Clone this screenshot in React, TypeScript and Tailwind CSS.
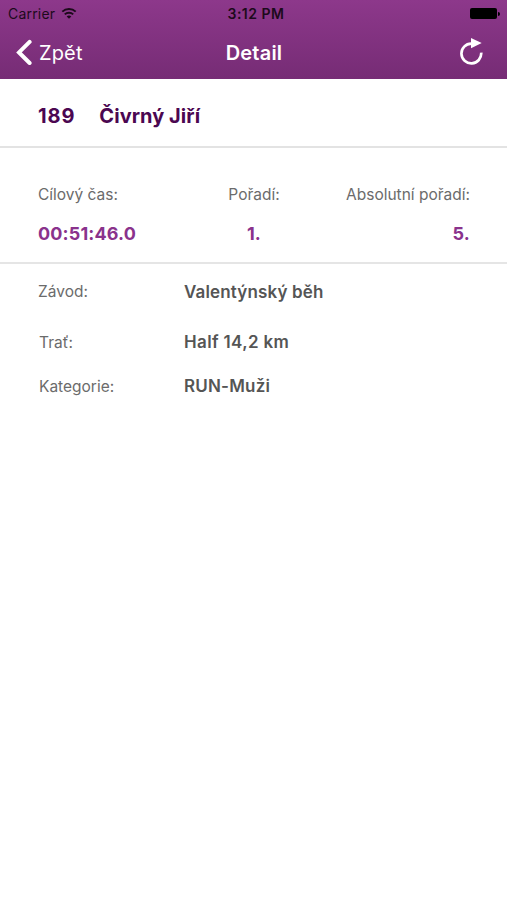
import clsx from "clsx";

const STATS = [
  { label: "Cílový čas:", value: "00:51:46.0" },
  { label: "Pořadí:", value: "1." },
  { label: "Absolutní pořadí:", value: "5." },
];

const RACE_INFO = [
  { label: "Závod:", value: "Valentýnský běh", row: "h-[56px] pl-[38px]", term: "w-[146px]", text: "pt-px tracking-[0.15px]" },
  { label: "Trať:", value: "Half 14,2 km", row: "h-[45px] pl-[39px]", term: "w-[145px]", text: "tracking-[0.35px]" },
  { label: "Kategorie:", value: "RUN-Muži", row: "h-[43px] pl-[39px]", term: "w-[145px]", text: "tracking-[0.2px]" },
];

const StatusBar = () => {
  return (
    <div className="grid h-[27px] grid-cols-3 items-center px-2 text-[14px] text-[#1c0a1b]">
      <div className="flex items-center gap-1.5">
        <span className="tracking-[0.2px]">Carrier</span>
        <svg className="mb-[2px] h-3 w-4" viewBox="0 0 16 12" fill="none" stroke="currentColor" strokeWidth="2">
          <path d="M1.3 4.6C5 1 11 1 14.7 4.6M3.8 7.4C6 5.2 10 5.2 12.2 7.4" />
          <path d="M8 11.8L5.7 9.4C7 8.3 9 8.3 10.3 9.4Z" fill="currentColor" stroke="none" />
        </svg>
      </div>
      <span className="pl-[5px] text-center font-semibold tracking-[0.5px]">3:12 PM</span>
      <div className="mr-[-1px] flex items-center justify-end">
        <div className="h-[11px] w-[27px] rounded-[2px] bg-black" />
        <div className="ml-px h-1 w-[2px] rounded-r bg-black" />
      </div>
    </div>
  );
};

const NavBar = () => {
  return (
    <div className="grid h-[52px] grid-cols-3 items-center px-4 text-white">
      <button className="flex items-center gap-[7px] text-[20px]">
        <svg className="mb-[2px] h-[26px] w-4" viewBox="0 0 16 26" fill="none" stroke="currentColor" strokeWidth="4">
          <path d="M13.6 2.9L3 13.4L13.6 24" strokeLinecap="round" />
        </svg>
        <span className="pb-px tracking-[0.15px]">Zpět</span>
      </button>
      <h1 className="pb-px pl-px text-center text-[20px] font-semibold tracking-[0.2px]">Detail</h1>
      <button className="mr-[7px] justify-self-end" aria-label="Obnovit">
        <svg className="mb-[2px] h-[28px] w-[24px]" viewBox="0 0 24 28" fill="none" stroke="currentColor" strokeWidth="2.7">
          <path d="M11.3 5.6A9.9 9.9 0 1 0 21.2 14.7" />
          <path d="M11 .1L21.7 4.9L11 10.2Z" fill="currentColor" stroke="none" />
        </svg>
      </button>
    </div>
  );
};

export default function App() {
  return (
    <div className="min-h-screen w-full bg-white font-['Inter','Liberation_Sans',sans-serif]">
      <header className="bg-linear-to-b from-[#8d388b] to-[#762c75]">
        <StatusBar />
        <NavBar />
      </header>

      <div className="flex h-[69px] items-center gap-[24px] border-b-2 border-[#e3e3e3] px-[38px] pt-[6px] text-[20px] font-bold text-[#4b0751]">
        <span className="tracking-[0.9px]">189</span>
        <h2 className="tracking-[0.05px]">Čivrný Jiří</h2>
      </div>

      <div className="grid h-[116px] grid-cols-3 border-b-2 border-[#e5e5e5] pr-[37px] pl-[38px] pt-[35px]">
        {STATS.map((stat, i) => (
          <div key={stat.label} className={clsx(i === 1 && "text-center", i === 2 && "text-right")}>
            <p className="text-[15.5px] leading-6 text-[#6b6b6b]">{stat.label}</p>
            <p className="mt-[15px] text-[18px] leading-6 font-bold tracking-[0.15px] text-[#8a328c]">
              {stat.value}
            </p>
          </div>
        ))}
      </div>

      <dl>
        {RACE_INFO.map((info) => (
          <div key={info.label} className={clsx("flex items-center", info.row)}>
            <dt className={clsx("text-[15.5px] text-[#6b6b6b]", info.term)}>{info.label}</dt>
            <dd className={clsx("text-[17px] font-semibold text-[#555]", info.text)}>{info.value}</dd>
          </div>
        ))}
      </dl>
    </div>
  );
}
